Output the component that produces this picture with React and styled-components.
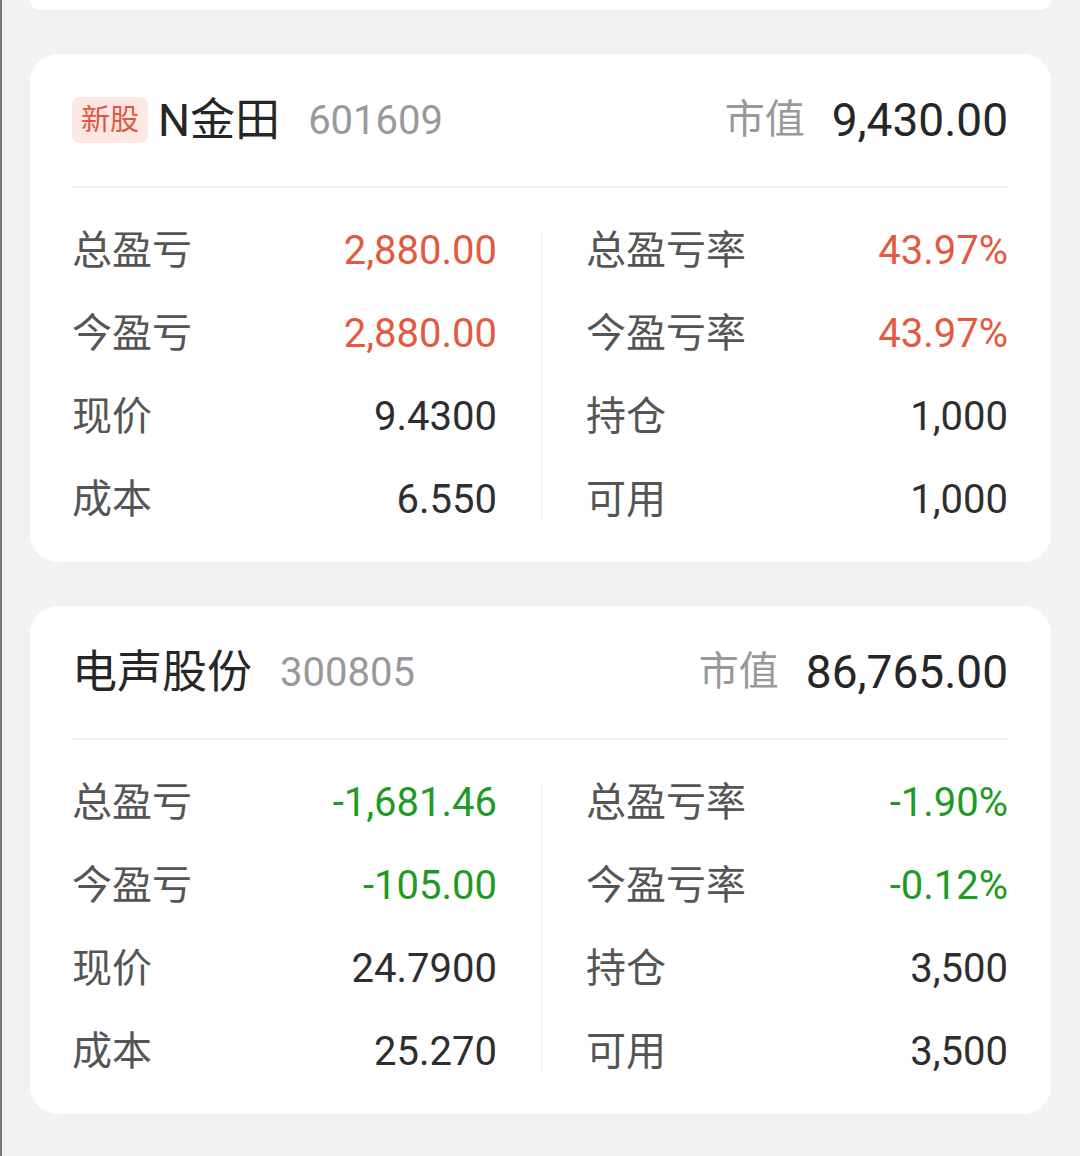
import styled, { createGlobalStyle } from 'styled-components';

const GlobalStyle = createGlobalStyle`
  html, body {
    margin: 0;
    padding: 0;
    background: #f2f2f4;
  }
  body {
    font-family: Roboto, "Noto Sans CJK SC", sans-serif;
  }
`;

const stocks = [
  {
    id: '601609',
    tag: '新股',
    name: 'N金田',
    marketValue: '9,430.00',
    left: [
      { label: '总盈亏', value: '2,880.00', tone: 'up' },
      { label: '今盈亏', value: '2,880.00', tone: 'up' },
      { label: '现价', value: '9.4300' },
      { label: '成本', value: '6.550' },
    ],
    right: [
      { label: '总盈亏率', value: '43.97%', tone: 'up' },
      { label: '今盈亏率', value: '43.97%', tone: 'up' },
      { label: '持仓', value: '1,000' },
      { label: '可用', value: '1,000' },
    ],
  },
  {
    id: '300805',
    name: '电声股份',
    marketValue: '86,765.00',
    left: [
      { label: '总盈亏', value: '-1,681.46', tone: 'down' },
      { label: '今盈亏', value: '-105.00', tone: 'down' },
      { label: '现价', value: '24.7900' },
      { label: '成本', value: '25.270' },
    ],
    right: [
      { label: '总盈亏率', value: '-1.90%', tone: 'down' },
      { label: '今盈亏率', value: '-0.12%', tone: 'down' },
      { label: '持仓', value: '3,500' },
      { label: '可用', value: '3,500' },
    ],
  },
];

const toneColor = (tone) => {
  switch (tone) {
    case 'up':
      return '#e35a40';
    case 'down':
      return '#1f9a24';
    default:
      return '#2e2e2e';
  }
};

const App = () => {
  return (
    <>
      <GlobalStyle />
      <Page>
        <PrevCard />
        {stocks.map(stock => (
          <Card key={stock.id}>
            <Header>
              <Title>
                {stock.tag && <Tag>{stock.tag}</Tag>}
                <Name>{stock.name}</Name>
                <Code>{stock.id}</Code>
              </Title>
              <Market>
                <MarketLabel>市值</MarketLabel>
                <MarketValue>{stock.marketValue}</MarketValue>
              </Market>
            </Header>
            <Body>
              <Column>
                {stock.left.map(row => (
                  <Row key={row.label}>
                    <Label>{row.label}</Label>
                    <Value tone={row.tone}>{row.value}</Value>
                  </Row>
                ))}
              </Column>
              <VDivider />
              <Column>
                {stock.right.map(row => (
                  <Row key={row.label}>
                    <Label>{row.label}</Label>
                    <Value tone={row.tone}>{row.value}</Value>
                  </Row>
                ))}
              </Column>
            </Body>
          </Card>
        ))}
      </Page>
    </>
  );
};

const Page = styled.div`
  min-height: 1156px;
  box-sizing: border-box;
  border-left: 2px solid #7a7a7a;
  padding: 0 29px 0 28px;
  display: flex;
  flex-direction: column;
  gap: 44px;
  overflow: hidden;
`;

const PrevCard = styled.div`
  height: 10px;
  background: #fff;
  border-radius: 0 0 28px 28px;
`;

const Card = styled.div`
  background: #fff;
  border-radius: 28px;
  padding: 0 43px 0 42px;
`;

const Header = styled.div`
  height: 132px;
  display: flex;
  align-items: center;
  justify-content: space-between;
  border-bottom: 2px solid #f0f0f0;
`;

const Title = styled.div`
  display: flex;
  align-items: center;
`;

const Tag = styled.span`
  background: #fde7e3;
  color: #e0573f;
  font-size: 29px;
  line-height: 46px;
  padding: 0 9px;
  border-radius: 8px;
  margin-right: 10px;
`;

const Name = styled.span`
  font-size: 45px;
  line-height: 1;
  color: #262626;
  margin-right: 28px;
`;

const Code = styled.span`
  font-size: 40px;
  color: #999;
`;

const Market = styled.div`
  display: flex;
  align-items: center;
`;

const MarketLabel = styled.span`
  font-size: 40px;
  line-height: 1;
  color: #999;
  margin-right: 27px;
`;

const MarketValue = styled.span`
  font-size: 46px;
  color: #262626;
`;

const Body = styled.div`
  display: grid;
  grid-template-columns: 425px 1px 1fr;
  column-gap: 44px;
`;

const Column = styled.div`
  padding: 21px 0;
  display: flex;
  flex-direction: column;
`;

const VDivider = styled.div`
  background: #ececec;
  margin: 43px 0 42px;
`;

const Row = styled.div`
  height: 83px;
  display: flex;
  align-items: center;
  justify-content: space-between;
`;

const Label = styled.span`
  font-size: 40px;
  line-height: 1;
  color: #555;
`;

const Value = styled.span`
  font-size: 40px;
  color: ${p => toneColor(p.tone)};
`;

export default App;
